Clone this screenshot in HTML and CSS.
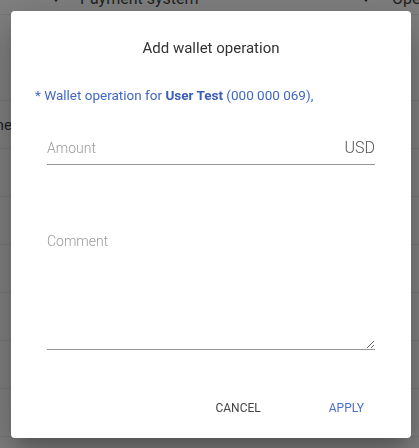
FILE: index.html
```html
<!DOCTYPE html>
<html>
<head>
<meta charset="utf-8">
<link rel="stylesheet" href="styles.css">
</head>
<body>
<div class="page">
  <div class="thead">
    <div class="th th-left"><svg class="caret" width="8" height="5" viewBox="0 0 8 5"><path d="M0 0 L8 0 L4 5 Z" fill="#333"/></svg><span>Payment system</span></div>
    <div class="th th-right"><svg class="caret" width="8" height="5" viewBox="0 0 8 5"><path d="M0 0 L8 0 L4 5 Z" fill="#333"/></svg><span>Operation</span></div>
  </div>
  <div class="filter-row"></div>
  <div class="row"><span class="cell">Name</span></div>
  <div class="row"></div>
  <div class="row"></div>
  <div class="row"></div>
  <div class="row"></div>
  <div class="row"></div>
  <div class="row"></div>
</div>
<div class="overlay">
  <div class="dialog">
    <div class="title">Add wallet operation</div>
    <div class="info">* Wallet operation for <b>User Test</b> (000 000 069),</div>
    <div class="field amount">
      <input class="input" placeholder="Amount">
      <span class="suffix">USD</span>
    </div>
    <div class="field comment">
      <textarea class="textarea" placeholder="Comment"></textarea>
    </div>
    <div class="actions">
      <button class="btn btn-cancel">Cancel</button>
      <button class="btn btn-apply">Apply</button>
    </div>
  </div>
</div>
</body>
</html>
```
FILE: styles.css
```css
html, body {
  margin: 0;
  padding: 0;
  background: #fff;
  font-family: Roboto, "Liberation Sans", sans-serif;
  overflow: hidden;
  width: 419px;
  height: 448px;
}
.page {
  width: 419px;
}
.thead {
  height: 15px;
  border-bottom: 1px solid #ececec;
  box-sizing: border-box;
  display: flex;
  overflow: hidden;
}
.th {
  display: flex;
  align-items: center;
  gap: 20px;
  font-size: 16px;
  line-height: 20px;
  color: #444;
  margin-top: -11px;
  height: 20px;
  flex-shrink: 0;
}
.th-left {
  padding-left: 52px;
  width: 362px;
  box-sizing: border-box;
}
.th-right { gap: 22px; }
.filter-row {
  height: 86px;
  border-bottom: 1px solid #ececec;
  box-sizing: border-box;
}
.row {
  height: 48px;
  border-bottom: 1px solid #ececec;
  box-sizing: border-box;
  display: flex;
  align-items: center;
}
.cell {
  font-size: 15px;
  color: #444;
  margin-left: -28px;
}
.overlay {
  position: fixed;
  inset: 0;
  background: rgba(0, 0, 0, 0.5);
}
.dialog {
  position: absolute;
  left: 11px;
  top: 11px;
  width: 400px;
  height: 427px;
  box-sizing: border-box;
  background: #fff;
  border-radius: 4px;
  box-shadow: 0 11px 15px -7px rgba(0,0,0,0.2), 0 24px 38px 3px rgba(0,0,0,0.14), 0 9px 46px 8px rgba(0,0,0,0.12);
  padding: 24px 24px 12px;
  display: flex;
  flex-direction: column;
}
.title {
  text-align: center;
  font-size: 15px;
  line-height: 26px;
  color: #333;
}
.info {
  margin-top: 24px;
  font-size: 13.5px;
  line-height: 20px;
  color: #4166c4;
}
.info b { font-weight: 700; color: #3b5db5; }
.field {
  margin: 0 12px;
  display: flex;
  border-bottom: 1px solid #949494;
}
.amount {
  margin-top: 26px;
  height: 34px;
  box-sizing: border-box;
  align-items: center;
}
.input {
  flex: 1;
  border: 0;
  outline: 0;
  padding: 0;
  font-family: inherit;
  font-size: 14px;
  font-weight: 300;
  color: #333;
  background: transparent;
}
.input::placeholder, .textarea::placeholder {
  color: #9a9a9a;
  font-weight: 300;
}
.suffix {
  font-size: 16px;
  font-weight: 300;
  color: #555;
}
.comment {
  margin-top: 66px;
  height: 119px;
  box-sizing: border-box;
}
.textarea {
  flex: 1;
  border: 0;
  outline: 0;
  padding: 0;
  margin: 0;
  resize: vertical;
  font-family: inherit;
  font-size: 14px;
  line-height: 20px;
  font-weight: 300;
  color: #333;
  background: transparent;
}
.actions {
  margin-top: auto;
  display: flex;
  justify-content: flex-end;
  gap: 36px;
  padding-right: 7px;
}
.btn {
  border: 0;
  background: transparent;
  font-family: inherit;
  font-size: 12px;
  text-transform: uppercase;
  height: 36px;
  padding: 0 16px;
  cursor: pointer;
}
.btn-cancel { color: #444; }
.btn-apply { color: #4a6fd0; }
```
